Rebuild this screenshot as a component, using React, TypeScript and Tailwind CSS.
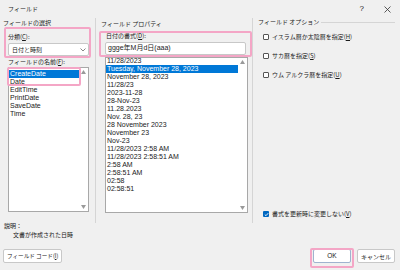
import React from "react";

const jp = { fontFamily: '"Noto Sans CJK JP", "Noto Sans", sans-serif' };
const lat = { fontFamily: '"Liberation Sans", "Noto Sans CJK JP", sans-serif' };

const fieldNames = ["CreateDate", "Date", "EditTime", "PrintDate", "SaveDate", "Time"];

const formats = [
  "11/28/2023",
  "Tuesday, November 28, 2023",
  "November 28, 2023",
  "11/28/23",
  "2023-11-28",
  "28-Nov-23",
  "11.28.2023",
  "Nov. 28, 23",
  "28 November 2023",
  "November 23",
  "Nov-23",
  "11/28/2023 2:58 AM",
  "11/28/2023 2:58:51 AM",
  "2:58 AM",
  "2:58:51 AM",
  "02:58",
  "02:58:51",
];

const Scrollbar: React.FC = () => (
  <div className="w-[9px] flex flex-col justify-between items-center py-[2px] text-[#9a9a9a]">
    <svg width="5" height="4" viewBox="0 0 5 4">
      <path d="M2.5 0 L5 4 L0 4 Z" fill="currentColor" />
    </svg>
    <svg width="5" height="4" viewBox="0 0 5 4">
      <path d="M0 0 L5 0 L2.5 4 Z" fill="currentColor" />
    </svg>
  </div>
);

const Check: React.FC<{ label: React.ReactNode; checked?: boolean }> = ({ label, checked }) => (
  <div className="flex items-center gap-[3px] h-[10px]">
    {checked ? (
      <div className="w-[6px] h-[6px] rounded-[1px] bg-[#0067c0] flex items-center justify-center">
        <svg width="5" height="5" viewBox="0 0 5 5">
          <path d="M0.8 2.6 L2 3.7 L4.2 1.2" stroke="white" strokeWidth="0.9" fill="none" />
        </svg>
      </div>
    ) : (
      <div className="w-[6px] h-[6px] rounded-[1px] border border-[#555] bg-white" />
    )}
    <span className="text-[6px] leading-[10px] whitespace-nowrap" style={jp}>{label}</span>
  </div>
);

export default function App() {
  return (
    <div className="relative w-[400px] h-[270px] bg-[#f0f0f0] text-[#1a1a1a] overflow-hidden flex flex-col">
      {/* title bar */}
      <div className="h-[18px] flex items-center pl-[8px] pr-[9px]">
        <span className="text-[6px] leading-[10px]" style={jp}>フィールド</span>
        <div className="ml-auto flex items-center gap-[20px] text-[8px]" style={lat}>
          <span>?</span>
          <svg width="7" height="7" viewBox="0 0 7 7">
            <path d="M0.5 0.5 L6.5 6.5 M6.5 0.5 L0.5 6.5" stroke="#333" strokeWidth="0.8" />
          </svg>
        </div>
      </div>

      {/* groups */}
      <div className="flex h-[205px]">
        <div className="w-[95px] flex flex-col pl-[8px] pr-[6px]">
          <div className="h-[10px] leading-[10px] text-[6px] -ml-[5px]" style={jp}>フィールドの選択</div>
          <div className="mt-[4px] h-[10px] leading-[10px] text-[6px]" style={jp}>分類(<u>C</u>):</div>
          <div className="mt-[1px] h-[13px] bg-white border border-[#c8c8c8] rounded-[2px] flex items-center pl-[3px] pr-[2px]">
            <span className="text-[6px]" style={jp}>日付と時刻</span>
            <svg className="ml-auto" width="6" height="4" viewBox="0 0 6 4">
              <path d="M0.5 0.5 L3 3 L5.5 0.5" stroke="#555" strokeWidth="0.7" fill="none" />
            </svg>
          </div>
          <div className="mt-[1px] h-[10px] leading-[10px] text-[6px]" style={jp}>フィールドの名前(<u>F</u>):</div>
          <div className="h-[145px] bg-white border border-[#a8a8a8] flex">
            <div className="flex-1 flex flex-col pt-[2px]">
              {fieldNames.map((n, i) => (
                <div
                  key={n}
                  className={`h-[8px] leading-[8px] text-[7px] pl-[1px] ${i === 0 ? "bg-[#0078d7] text-white" : ""}`}
                  style={lat}
                >
                  {n}
                </div>
              ))}
            </div>
            <Scrollbar />
          </div>
        </div>

        <div className="w-[157px] border-l border-[#d5d5d5] flex flex-col pl-[9px] pr-[4px]">
          <div className="h-[12px] leading-[12px] text-[6px] -ml-[4px]" style={jp}>フィールド プロパティ</div>
          <div className="mt-[1px] h-[10px] leading-[10px] text-[6px] ml-[1px]" style={jp}>日付の書式(<u>D</u>):</div>
          <div className="mt-[1px] h-[13px] bg-white border border-[#c8c8c8] rounded-[2px] flex items-center pl-[2px] mr-[2px]">
            <span className="text-[7px]" style={lat}>ggge年M月d日(aaa)</span>
          </div>
          <div className="mt-[2px] h-[156px] bg-white border border-[#a8a8a8] flex overflow-hidden">
            <div className="flex-1 flex flex-col -mt-[1px]">
              {formats.map((f, i) => (
                <div
                  key={f}
                  className={`h-[8px] leading-[8px] text-[7px] pl-[1px] shrink-0 ${i === 1 ? "bg-[#0078d7] text-white" : ""}`}
                  style={lat}
                >
                  {f}
                </div>
              ))}
            </div>
            <Scrollbar />
          </div>
        </div>

        <div className="flex-1 border-l border-[#d5d5d5] flex flex-col pl-[10px] pr-[5px]">
          <div className="h-[8px] flex items-center -ml-[5px]">
            <span className="text-[6px] leading-[8px] pr-[2px]" style={jp}>フィールド オプション</span>
            <div className="flex-1 border-t border-[#d5d5d5]" />
          </div>
          <div className="mt-[6px] flex flex-col gap-[9px]">
            <Check label={<>イスラム暦か太陰暦を指定(<u>H</u>)</>} />
            <Check label={<>サカ暦を指定(<u>S</u>)</>} />
            <Check label={<>ウム アルクラ暦を指定(<u>U</u>)</>} />
          </div>
          <div className="mt-auto mb-[4px]">
            <Check checked label={<>書式を更新時に変更しない(<u>V</u>)</>} />
          </div>
        </div>
      </div>

      {/* description */}
      <div className="pl-[4px] -mt-[2px]">
        <div className="h-[9px] leading-[9px] text-[6px]" style={jp}>説明：</div>
        <div className="h-[9px] leading-[9px] text-[6px] pl-[9px]" style={jp}>文書が作成された日時</div>
      </div>

      {/* buttons */}
      <div className="mt-[10px] flex items-center pl-[3px] pr-[5px]">
        <div className="h-[14px] px-[3px] bg-white border border-[#c8c8c8] rounded-[2px] flex items-center justify-center whitespace-nowrap text-[5.6px]" style={jp}>
          <span>フィールド コード(</span>
          <u>I</u>
          <span>)</span>
        </div>
        <div className="ml-auto h-[14px] w-[38px] bg-white border border-[#9fb3cf] rounded-[2px] flex items-center justify-center text-[6.5px]" style={lat}>
          OK
        </div>
        <div className="ml-[6px] h-[14px] w-[38px] bg-white border border-[#c8c8c8] rounded-[2px] flex items-center justify-center text-[6px]" style={jp}>
          キャンセル
        </div>
      </div>

      {/* highlight marks */}
      <div className="absolute left-[4px] top-[27px] w-[87px] h-[31px] border-2 border-[#f4a6c6] rounded-[2px]" />
      <div className="absolute left-[7px] top-[67px] w-[74px] h-[19px] border-2 border-[#f4a6c6] rounded-[2px]" />
      <div className="absolute left-[99px] top-[31px] w-[153px] h-[26px] border-2 border-[#f4a6c6] rounded-[2px]" />
      <div className="absolute left-[310px] top-[248px] w-[44px] h-[20px] border-2 border-[#f4a6c6] rounded-[2px]" />
    </div>
  );
}
